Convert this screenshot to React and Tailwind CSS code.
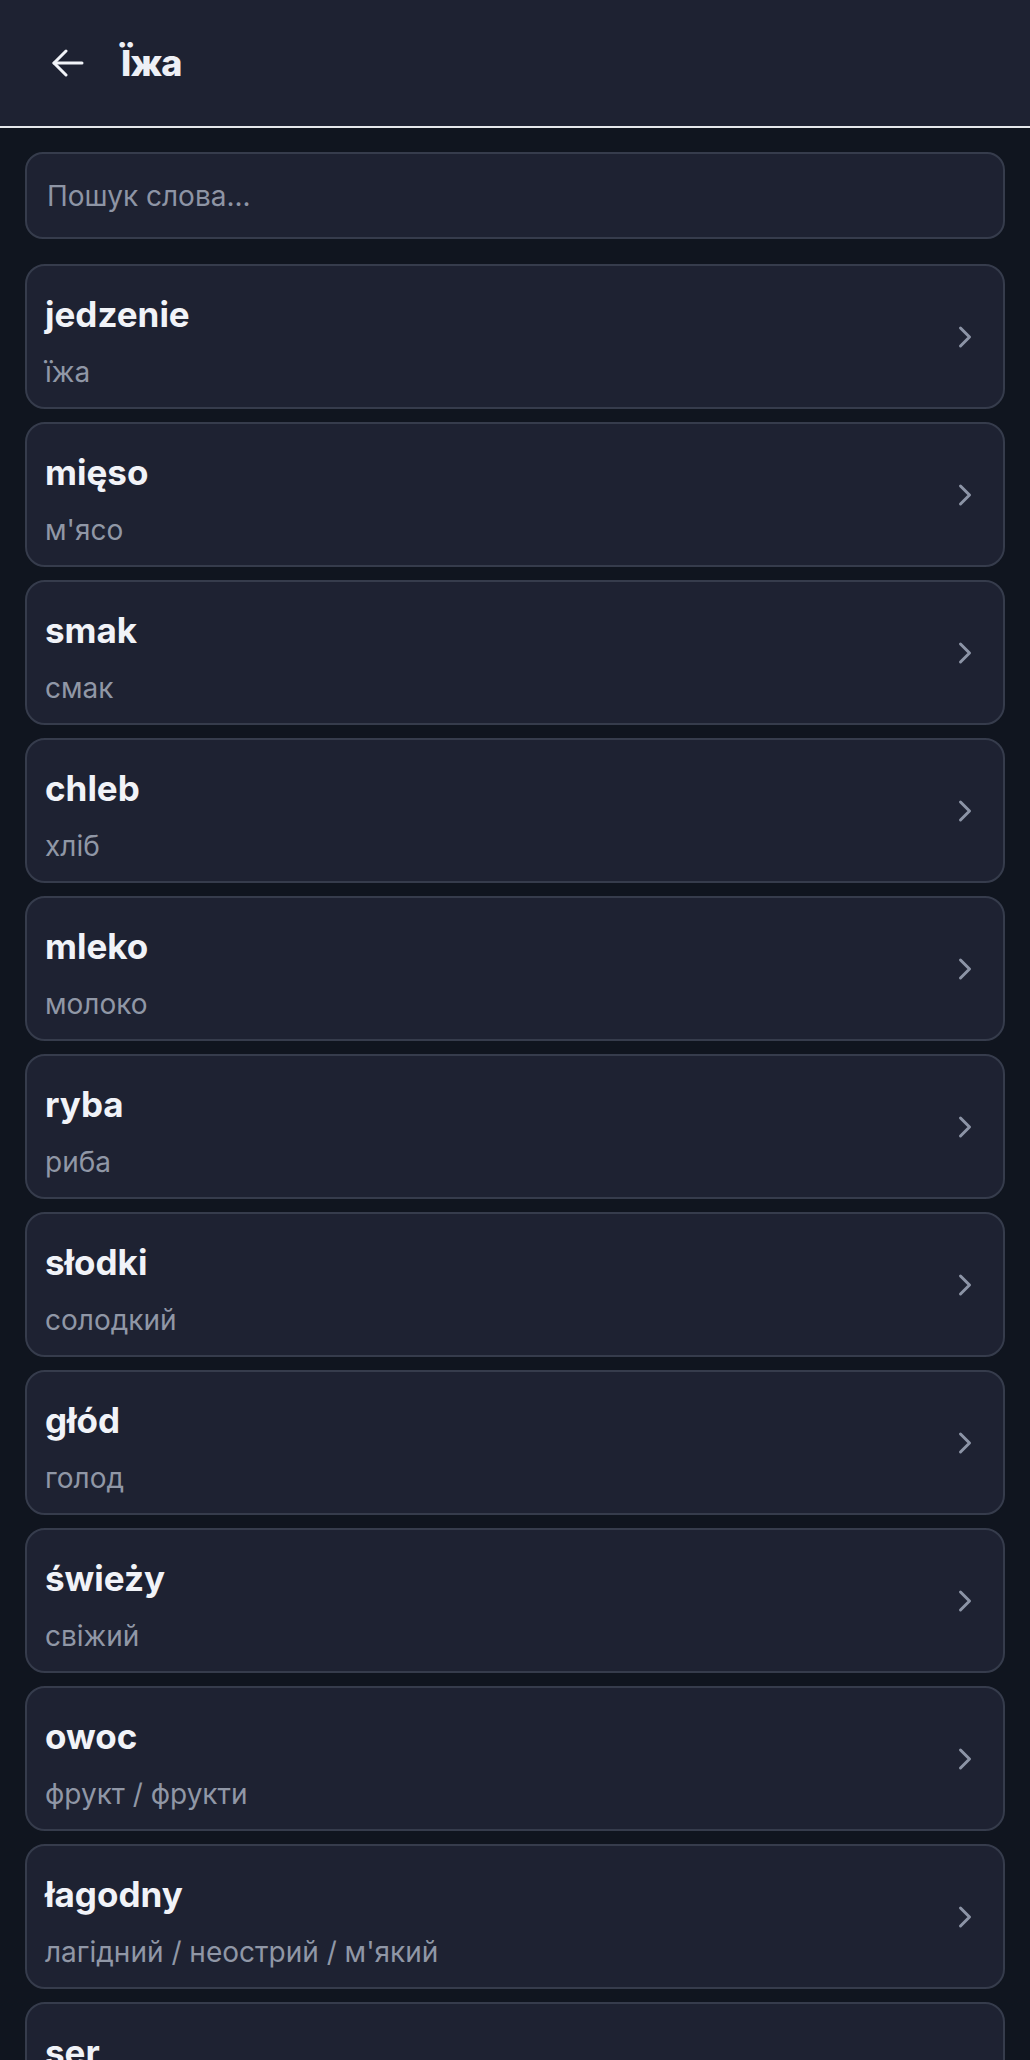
import { useState } from 'react'
import { ChevronRight } from 'lucide-react'

const WORDS = [
  { pl: 'jedzenie', uk: 'їжа' },
  { pl: 'mięso', uk: "м'ясо" },
  { pl: 'smak', uk: 'смак' },
  { pl: 'chleb', uk: 'хліб' },
  { pl: 'mleko', uk: 'молоко' },
  { pl: 'ryba', uk: 'риба' },
  { pl: 'słodki', uk: 'солодкий' },
  { pl: 'głód', uk: 'голод' },
  { pl: 'świeży', uk: 'свіжий' },
  { pl: 'owoc', uk: 'фрукт / фрукти' },
  { pl: 'łagodny', uk: "лагідний / неострий / м'який" },
  { pl: 'ser', uk: 'сир' },
]

export default function App() {
  const [query, setQuery] = useState('')

  const items = WORDS.filter(w =>
    !query || w.pl.includes(query.toLowerCase()) || w.uk.includes(query.toLowerCase())
  )

  return (
    <div className="min-h-screen bg-[#10151f] font-['Inter','Noto_Sans',sans-serif] pb-10">
      <header className="h-[128px] bg-[#1e2232] border-b-2 border-[#e5e7eb] flex items-center pl-[52px]">
        <button className="text-[#f1f3f8]">
          <svg width="32" height="28" viewBox="0 0 32 28" fill="none" stroke="currentColor" strokeWidth="3" strokeLinecap="round" strokeLinejoin="round">
            <path d="M2 14h28" />
            <path d="M14 2 2 14l12 12" />
          </svg>
        </button>
        <h1 className="ml-[37px] text-[36px] font-extrabold text-[#eef0f6] tracking-tight">Їжа</h1>
      </header>

      <div className="mx-[25px] mt-[24px] h-[87px] rounded-[18px] border-2 border-[#363c4c] bg-[#1e2232] flex items-center px-[20px]">
        <input
          value={query}
          onChange={e => setQuery(e.target.value)}
          placeholder="Пошук слова..."
          className="w-full bg-transparent outline-none text-[28px] text-[#eef0f6] placeholder:text-[#8e95a5]"
        />
      </div>

      <div className="mx-[25px] mt-[25px] flex flex-col gap-[13px]">
        {items.map(w => (
          <div
            key={w.pl}
            className="h-[145px] shrink-0 rounded-[20px] border-2 border-[#363c4c] bg-[#1e2232] flex justify-between pl-[18px] pr-[20px]"
          >
            <div className="flex flex-col pt-[28px]">
              <span className="text-[35px] leading-[40px] font-bold text-[#f1f3f8]">{w.pl}</span>
              <span className="mt-[20px] text-[28px] leading-[36px] text-[#9097a6]">{w.uk}</span>
            </div>
            <ChevronRight size={36} className="self-center text-[#8c94a6]" />
          </div>
        ))}
      </div>
    </div>
  )
}
